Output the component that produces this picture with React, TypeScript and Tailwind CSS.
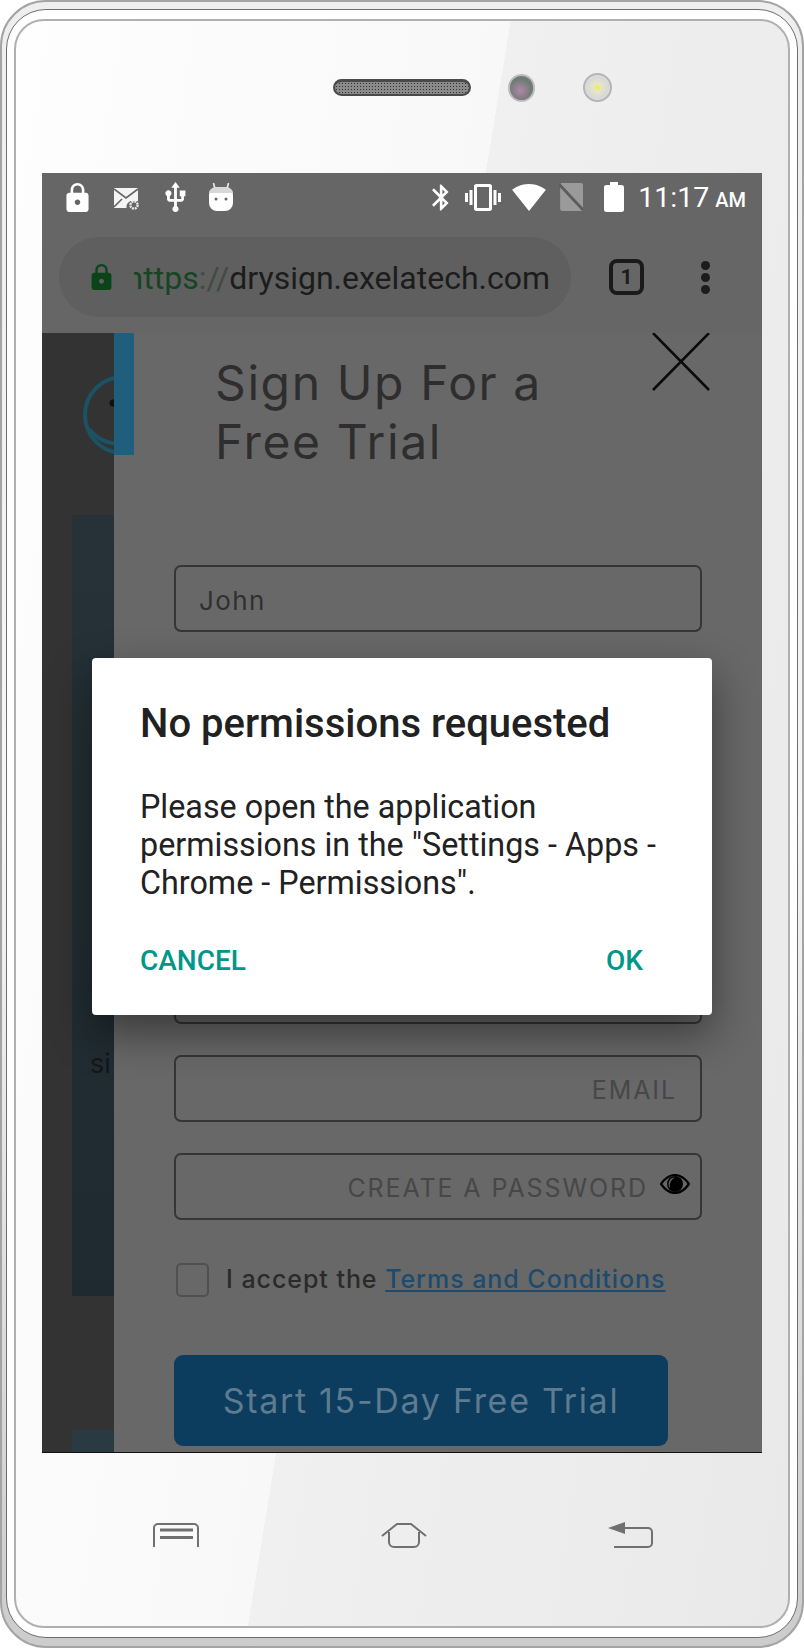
import React from 'react'

const roboto = "font-['Roboto',sans-serif]"
const work = "font-['Inter',sans-serif]"

function LockIcon({ className }: { className: string }) {
  return (
    <svg viewBox="4 1 16 21" className={className} fill="currentColor">
      <path d="M18 8h-1V6c0-2.76-2.24-5-5-5S7 3.24 7 6v2H6c-1.1 0-2 .9-2 2v10c0 1.1.9 2 2 2h12c1.1 0 2-.9 2-2V10c0-1.1-.9-2-2-2zm-6 9c-1.1 0-2-.9-2-2s.9-2 2-2 2 .9 2 2-.9 2-2 2zm3.1-9H8.9V6c0-1.71 1.39-3.1 3.1-3.1 1.71 0 3.1 1.39 3.1 3.1v2z" />
    </svg>
  )
}

function StatusLeft() {
  return (
    <div className="flex items-center text-white">
      <LockIcon className="w-[23px] h-[29px]" />
      <svg viewBox="0 0 26 24" className="ml-[25px] w-[26px] h-[24px] mt-[4px]">
        <path d="M0 1h24v13h-7.5a7 7 0 0 0-4 7H0z" fill="#f4f4f4" />
        <path d="M0 2l12 9 12-9M0 20l8-8" fill="none" stroke="#666" strokeWidth="1.6" />
        <circle cx="20" cy="18" r="3.6" fill="none" stroke="#e8e8e8" strokeWidth="2.4" strokeDasharray="2 0.8" />
      </svg>
      <svg viewBox="4.8 1 14.4 21.2" className="ml-[25px] w-[21px] h-[30px]" fill="currentColor">
        <path d="M15 7v4h1v2h-3V5h2l-3-4-3 4h2v8H8v-2.07c.7-.37 1.2-1.08 1.2-1.93 0-1.21-.99-2.2-2.2-2.2-1.21 0-2.2.99-2.2 2.2 0 .85.5 1.56 1.2 1.93V13c0 1.11.89 2 2 2h3v3.05c-.71.37-1.2 1.1-1.2 1.95 0 1.22.99 2.2 2.2 2.2 1.21 0 2.2-.98 2.2-2.2 0-.85-.49-1.58-1.2-1.95V15h3c1.11 0 2-.89 2-2v-2h1V7h-4z" />
      </svg>
      <svg viewBox="0 0 24 28" className="ml-[23px] w-[24px] h-[28px]">
        <path d="M6 6L4.5 0M18 6L19.5 0" stroke="#eee" strokeWidth="1.6" />
        <path d="M0 12a8 8 0 0 1 8-8h8a8 8 0 0 1 8 8v8a8 8 0 0 1-8 8H8a8 8 0 0 1-8-8z" fill="#fff" />
        <path d="M0 10a8 6 0 0 1 8-6h8a8 6 0 0 1 8 6z" fill="#d8d8d8" />
        <circle cx="7" cy="16" r="1.5" fill="#666" />
        <circle cx="17" cy="16" r="1.5" fill="#666" />
      </svg>
    </div>
  )
}

function StatusRight() {
  return (
    <div className="flex items-center text-white">
      <svg viewBox="5 2 13 20" className="w-[17px] h-[27px] mr-[16px]" fill="currentColor">
        <path d="M17.71 7.71L12 2h-1v7.59L6.41 5 5 6.41 10.59 12 5 17.59 6.41 19 11 14.41V22h1l5.71-5.71-4.3-4.29 4.3-4.29zM13 5.83l1.88 1.88L13 9.59V5.83zm1.88 10.46L13 18.17v-3.76l1.88 1.88z" />
      </svg>
      <svg viewBox="0 3 24 18" className="w-[36px] h-[27px] mr-[11px]" fill="currentColor">
        <path d="M0 15h2V9H0v6zm3 2h2V7H3v10zm19-8v6h2V9h-2zm-3 8h2V7h-2v10zM16.5 3h-9C6.67 3 6 3.67 6 4.5v15c0 .83.67 1.5 1.5 1.5h9c.83 0 1.5-.67 1.5-1.5v-15c0-.83-.67-1.5-1.5-1.5zM16 19H8V5h8v14z" />
      </svg>
      <svg viewBox="0.3 3 23.4 18.5" className="w-[34px] h-[27px] mr-[13px]" fill="currentColor">
        <path d="M12.01 21.49L23.64 7c-.45-.34-4.93-4-11.64-4C5.28 3 .81 6.66.36 7l11.63 14.49.01.01.01-.01z" />
      </svg>
      <svg viewBox="0 0 21 27" preserveAspectRatio="none" className="w-[24px] h-[28px] mr-[21px]">
        <path d="M2 0h17a2 2 0 0 1 2 2v23a2 2 0 0 1-2 2H3a2 2 0 0 1-2-2V2a2 2 0 0 1 1-2z" fill="#9a9a9a" />
        <path d="M0 1l21 25" stroke="#5c5c5c" strokeWidth="2.6" />
      </svg>
      <svg viewBox="7 2 10 20" preserveAspectRatio="none" className="w-[20px] h-[30px] mr-[14px]" fill="currentColor">
        <path d="M15.67 4H14V2h-4v2H8.33C7.6 4 7 4.6 7 5.33v15.33C7 21.4 7.6 22 8.33 22h7.33c.74 0 1.34-.6 1.34-1.33V5.33C17 4.6 16.4 4 15.67 4z" />
      </svg>
      <span className={`${roboto} text-[28.5px] leading-none mt-[2px]`}>11:17</span>
      <span className={`${roboto} text-[20px] leading-none ml-[6px] mt-[6px] font-medium`}>AM</span>
    </div>
  )
}

function AddressBar() {
  return (
    <div className="h-[112px] bg-[#666666] flex items-center pl-[17px]">
      <div className="w-[512px] h-[80px] rounded-full bg-[#5f5f5f] flex items-center pl-[32px] shrink-0">
        <LockIcon className="w-[21px] h-[26px] text-[#0b4419] shrink-0" />
        <div className={`${roboto} ml-[22px] mt-[2px] w-[416px] overflow-hidden whitespace-nowrap text-[32px] leading-[40px] flex justify-end`}>
          <span className="text-[#174524]">https</span>
          <span className="text-[#424a44]">://</span>
          <span className="text-[#1c1c1c]">drysign.exelatech.com</span>
        </div>
      </div>
      <div className="ml-[38px] w-[35px] h-[36px] rounded-[8px] border-4 border-[#1a1a1a] flex items-center justify-center">
        <span className={`${roboto} text-[21px] font-bold text-[#1c1c1c] leading-none`}>1</span>
      </div>
      <div className="ml-[57px] flex flex-col gap-[3px]">
        <span className="w-[9px] h-[9px] rounded-full bg-[#1c1c1c]" />
        <span className="w-[9px] h-[9px] rounded-full bg-[#1c1c1c]" />
        <span className="w-[9px] h-[9px] rounded-full bg-[#1c1c1c]" />
      </div>
    </div>
  )
}

function Field({ label, value, eye }: { label?: string; value?: string; eye?: boolean }) {
  return (
    <div className="relative h-[67px] w-[528px] rounded-[7px] border-2 border-[#363636] flex items-center px-[23px]">
      {value ? (
        <span className={`${work} mt-[3px] text-[26px] tracking-[1.4px] text-[#303030]`}>{value}</span>
      ) : (
        <span className={`${work} mt-[4px] ml-auto text-[25px] tracking-[1.9px] text-[#474747] ${eye ? 'mr-[29px]' : ''}`}>{label}</span>
      )}
      {eye && (
        <svg viewBox="0 0 30 20" className="absolute right-[10px] top-[19px] w-[30px] h-[20px]">
          <path d="M1 10C6 3 10 1 15 1s9 2 14 9c-5 7-9 9-14 9S6 17 1 10z" fill="#fff0" stroke="#000" strokeWidth="2.2" />
          <circle cx="15" cy="10" r="8" fill="#000" />
          <path d="M15 3.5a6.5 6.5 0 0 0-5 10.5A9 9 0 0 1 15 3.5z" fill="#666" />
        </svg>
      )}
    </div>
  )
}

function BackgroundPage() {
  return (
    <div className="w-[72px] shrink-0 bg-[#333333] overflow-hidden flex flex-col">
      <div className="h-[182px] pt-[42px] pl-[41px] shrink-0">
        <svg viewBox="0 0 80 80" className="w-[80px] h-[80px]">
          <circle cx="40" cy="40" r="38" fill="none" stroke="#1b5365" strokeWidth="4" />
          <path d="M6 54c14 18 40 20 60 4" fill="none" stroke="#1b5365" strokeWidth="4" />
          <circle cx="30" cy="28" r="3.5" fill="#101010" />
        </svg>
      </div>
      <div className="ml-[30px] h-[781px] shrink-0 bg-gradient-to-b from-[#263238] to-[#1e2a30] overflow-hidden pt-[535px] pl-[18px]">
        <span className={`${work} text-[27px] leading-none text-[#161616]`}>si</span>
      </div>
      <div className="ml-[30px] mt-[134px] h-[30px] shrink-0 bg-[#2a3a42]" />
    </div>
  )
}

function SignUpPanel() {
  return (
    <div className="relative flex-1 bg-[#686868] overflow-hidden">
      {/* teal tab and close */}
      <div className="absolute left-0 top-0 w-[20px] h-[122px] bg-[#1f5f7d]" />
      <svg viewBox="0 0 58 58" className="absolute left-[538px] top-0 w-[58px] h-[58px]">
        <path d="M1 0l56 57M57 0L1 57" stroke="#0a0a0a" strokeWidth="2.5" />
      </svg>
      <h1 className={`${work} ml-[101px] pt-[20px] text-[48px] leading-[59px] tracking-[1.6px] font-normal text-[#2e2e2e]`}>
        Sign Up For a<br />Free Trial
      </h1>
      <div className="ml-[60px] mt-[94px] flex flex-col gap-[31px]">
        <Field value="John" />
        <Field />
        <Field />
        <Field />
        <Field />
        <Field label="EMAIL" />
        <Field label="CREATE A PASSWORD" eye />
      </div>
      <div className="ml-[62px] mt-[41px] flex items-center">
        <div className="w-[33px] h-[34px] rounded-[5px] border-2 border-[#505050]" />
        <p className={`${work} ml-[17px] text-[25px] tracking-[0.95px] font-medium text-[#2a2a2a] whitespace-nowrap`}>
          I accept the <span className="text-[#1c4b6e] underline">Terms and Conditions</span>
        </p>
      </div>
      <div className={`${work} ml-[60px] mt-[56px] w-[494px] h-[91px] rounded-[9px] bg-[#0c3c5e] flex items-center justify-center text-[34px] tracking-[1.7px] text-[#5e7b90]`}>
        Start 15-Day Free Trial
      </div>
    </div>
  )
}

function PermissionDialog() {
  return (
    <div className={`${roboto} absolute left-[50px] top-[485px] w-[620px] h-[357px] rounded-[4px] bg-white shadow-[0_18px_44px_rgba(0,0,0,0.45)] pl-[48px] pr-[50px] pt-[43px]`}>
      <h2 className="text-[40px] leading-[46px] font-medium text-[#212121]">No permissions requested</h2>
      <p className="mt-[41px] text-[32.3px] leading-[38px] text-[#212121] whitespace-nowrap">
        Please open the application
        <br />
        permissions in the "Settings - Apps -
        <br />
        Chrome - Permissions".
      </p>
      <div className="mt-[43px] flex justify-between pr-[19px] text-[28px] leading-[32px] font-medium text-[#009688]">
        <span>CANCEL</span>
        <span>OK</span>
      </div>
    </div>
  )
}

function NavKeys() {
  return (
    <div className="flex justify-between pl-[137px] pr-[134px] pt-[69px] text-[#707070]">
      <svg viewBox="0 0 46 26" className="w-[46px] h-[26px]" fill="none" stroke="currentColor" strokeWidth="2">
        <path d="M1 25V6a4 4 0 0 1 4-4h36a4 4 0 0 1 4 4v19" />
        <path d="M7 8h33M7 15.5h33" strokeWidth="3" />
      </svg>
      <svg viewBox="0 0 46 26" className="w-[46px] h-[26px]" fill="none" stroke="currentColor" strokeWidth="2">
        <path d="M1 14L16 2h14l15 12" />
        <path d="M8 10v10a5 5 0 0 0 5 5h20a5 5 0 0 0 5-5V10" />
      </svg>
      <svg viewBox="0 0 46 26" className="w-[46px] h-[26px]" fill="none" stroke="currentColor" strokeWidth="2">
        <path d="M0 6l17-6v12z" fill="currentColor" stroke="none" />
        <path d="M15 6h25a4 4 0 0 1 4 4v11a4 4 0 0 1-4 4H6" />
      </svg>
    </div>
  )
}

export default function App() {
  return (
    <div className="w-[804px] h-[1648px] rounded-[46px] border-2 border-[#a4a4a4] bg-gradient-to-b from-[#eeeeee] via-[#f6f6f6] to-[#cccccc] pt-[7px] px-[4px] pb-[8px] overflow-hidden">
      <div className="h-full rounded-[40px] border border-[#6e6e6e] bg-white pt-[9px] px-[7px] pb-[9px]">
        <div className="h-full rounded-[30px] border-2 border-[#b0b0b0] bg-[linear-gradient(99.3deg,#fefefe_0%,#f8f8f8_47.8%,#f0f0f0_47.8%,#e9e9e9_100%)] flex flex-col">
          {/* earpiece, camera, led */}
          <div className="h-[152px] shrink-0 pl-[317px] pt-[52px]">
            <div className="flex items-center">
              <div className="w-[138px] h-[17px] rounded-full border-2 border-t-[3px] border-[#4a4a4a] bg-[#8a8a8a] bg-[radial-gradient(#333333_0.8px,transparent_0.9px)] bg-[length:3px_3px]" />
              <div className="ml-[37px] w-[27px] h-[28px] rounded-full border-2 border-[#bdbdbd] bg-[radial-gradient(circle_at_45%_60%,#b088a8,#6f7a74_60%,#7d7d7d)]" />
              <div className="ml-[48px] w-[29px] h-[29px] rounded-full border-2 border-[#b5b5b5] bg-[radial-gradient(circle_at_50%_50%,#eef03a_0%,#e6e6c8_22%,#d8d8d8_60%,#ececec)]" />
            </div>
          </div>
          {/* screen */}
          <div className="relative ml-[26px] w-[720px] h-[1280px] shrink-0 overflow-hidden border-b border-[#111111] flex flex-col">
            <div className="h-[48px] shrink-0 bg-[#666666] flex items-center justify-between pl-[24px] pr-[16px]">
              <StatusLeft />
              <StatusRight />
            </div>
            <AddressBar />
            <div className="flex flex-1 min-h-0">
              <BackgroundPage />
              <SignUpPanel />
            </div>
            <PermissionDialog />
          </div>
          <NavKeys />
        </div>
      </div>
    </div>
  )
}
